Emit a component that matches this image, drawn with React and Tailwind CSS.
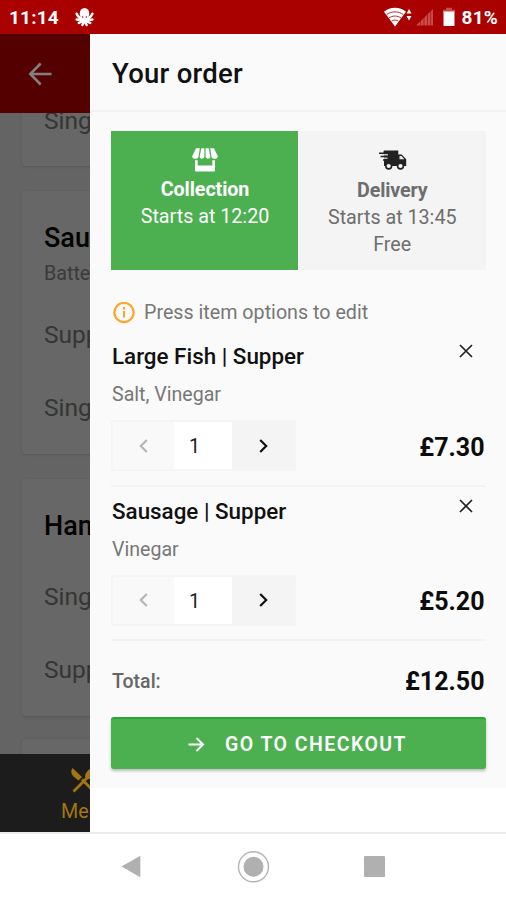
import React from "react";

function StatusBar() {
  return (
    <div className="flex h-[34px] items-center bg-[#a90000] pl-[9px] pr-[8px] text-white">
      <span className="pt-[2px] text-[19px] font-bold leading-[34px] tracking-[0.2px]">11:14</span>
      <svg className="ml-[16px] -mt-px" width="19" height="20" viewBox="0 0 20 20" fill="none" stroke="#fff" strokeWidth="2.600" strokeLinecap="round">
        <ellipse cx="10" cy="6.200" rx="5" ry="5.800" fill="#fff" stroke="none" />
        <path d="M7.500 10.500C6 12 3 9.500 1.700 6.500M7.500 11.500C6 13 3.500 13 1.700 12.600M8 12C8 15 5.500 15.500 4 16.200M9.200 12C9.500 15 9 17 7.800 18.400M12.500 10.500C14 12 17 9.500 18.300 6.500M12.500 11.500C14 13 16.500 13 18.300 12.600M12 12C12 15 14.500 15.500 16 16.200M10.800 12C10.500 15 11 17 12.200 18.400M10 8v6" />
        <circle cx="8" cy="10" r="0.800" fill="#a90000" stroke="none" />
        <circle cx="12" cy="10" r="0.800" fill="#a90000" stroke="none" />
      </svg>
      <div className="grow" />
      <svg width="28" height="20" viewBox="0 0 28 20">
        <path d="M0 4.800C6 -.6 16 -.6 22 4.800L11 19.500Z" fill="#fff" />
        <path d="M2.600 7.600c5-3.600 11.800-3.600 16.800 0M5 11c3.500-2.600 8.500-2.600 12 0M7.500 14.200c2.200-1.500 4.800-1.500 7 0" fill="none" stroke="#b92c2c" strokeWidth="1" />
        <path d="M25 2l2.500 4.600h-5zM25 13.500l2.500-4.600h-5z" fill="#fff" />
      </svg>
      <svg className="ml-[4px]" width="18" height="18" viewBox="0 0 18 18">
        <path d="M0 17.500L17 1v16.500z" fill="#c84c4c" />
        <path d="M4.500 0v18M8 0v18M11.500 0v18M14.700 0v18" stroke="#a90000" strokeWidth=".6" />
      </svg>
      <svg className="ml-[9px] mr-px" width="12" height="20" viewBox="0 0 12 20">
        <path d="M3 .8h6v2h3v3H0V2.800h3z" fill="#c84c4c" />
        <path d="M.5 4.500h11v14.500H.5z" fill="#fff" />
      </svg>
      <span className="ml-[6px] pt-[2px] text-[19px] font-bold leading-[34px] tracking-[0.200px]">81%</span>
    </div>
  );
}

function MenuRow({ children, className }) {
  return <div className={"pl-[22px] text-[24.500px] leading-[30px] text-[#353535] " + className}>{children}</div>;
}

function MenuBehind() {
  return (
    <div className="flex w-[90px] shrink-0 flex-col overflow-hidden whitespace-nowrap bg-[#646464]">
      <div className="flex h-[79px] shrink-0 items-center bg-[#550000] pl-[28px]">
        <svg width="24" height="24" viewBox="0 0 24 24" fill="none" stroke="#808080" strokeWidth="2.500">
          <path d="M23.500 12H2.500M12.700 1.500L2.200 12l10.500 10.500" />
        </svg>
      </div>
      <div className="flex h-[641px] shrink-0 flex-col overflow-hidden pl-[22px]">
        <div className="h-[53px] w-[200px] shrink-0 rounded-b bg-[#676767] shadow-[0_1px_2px_#585858]">
          <MenuRow className="-mt-[7px]">Single</MenuRow>
        </div>
        <div className="mt-[25px] h-[263px] w-[200px] shrink-0 rounded bg-[#676767] pt-[32px] shadow-[0_1px_2px_#585858]">
          <div className="pl-[22px] text-[27px] font-medium leading-[30px] text-black">Sausage</div>
          <div className="mt-[7px] pl-[22px] text-[19.700px] leading-[28px] text-[#3a3a3a]">Battered</div>
          <MenuRow className="mt-[32px]">Supper</MenuRow>
          <MenuRow className="mt-[43px]">Single</MenuRow>
        </div>
        <div className="mt-[25px] h-[237px] w-[200px] shrink-0 rounded bg-[#676767] pt-[32px] shadow-[0_1px_2px_#585858]">
          <div className="pl-[22px] text-[27px] font-medium leading-[30px] text-black">Hamburger</div>
          <MenuRow className="mt-[41px]">Single</MenuRow>
          <MenuRow className="mt-[43px]">Supper</MenuRow>
        </div>
        <div className="mt-[23px] h-[40px] w-[200px] shrink-0 rounded bg-[#676767] shadow-[0_0_2px_#5a5a5a]" />
      </div>
      <div className="h-[78px] shrink-0 bg-[#1c1c1c] pl-[61px] pt-[13px] text-[#a37613]">
        <svg className="ml-[9px]" width="27" height="26" viewBox="0 0 27 26" fill="none">
          <path d="M2.500 1C.5 4 1 7 3.500 9.500l5 4 3.500-3.500z" fill="#a37613" />
          <path d="M3.500 24.500L19 9M12 12.500l12 12" stroke="#a37613" strokeWidth="2.800" />
          <path d="M15.500 11C14 8 17 3 22 1l4 4c-2 5-6 8-9 7z" fill="#a37613" />
        </svg>
        <div className="text-[19.700px] leading-[37px]">Menu</div>
      </div>
    </div>
  );
}

function StoreIcon() {
  return (
    <svg width="26" height="24" viewBox="0 0 26 24" fill="#fff">
      <path d="M4 .3h3.800L6.600 8.500c-.3 3.200-6.400 3.200-6.400-.3zM9.300.3h3.100v8.500c-.5 2.500-4.600 2.500-4.700 0zM13.600.3h3.100l1.600 8.500c-.1 2.500-4.200 2.500-4.700 0zM18.200.3H22l3.800 7.900c0 3.500-6.100 3.500-6.400.3z" />
      <path d="M3 12.300h2.700v5.200h14.600v-5.200H23v9.600c0 1-.6 1.600-1.600 1.600H4.600c-1 0-1.600-.6-1.600-1.600z" />
    </svg>
  );
}

function TruckIcon() {
  return (
    <svg className="ml-[2px]" width="28" height="20" viewBox="0 0 28 20">
      <path d="M4.500 2C4.500.9 5 .6 5.700.6h13.600v4h3.400l4.500 4.700V16H5V9z" fill="#222" />
      <path d="M20.500 6h2l2.900 3.300h-4.900z" fill="#e8e8e8" />
      <path d="M0 4.800h9M1.500 8.200h7" stroke="#f4f4f4" strokeWidth="1.300" />
      <path d="M0 3.300h9.500M1.500 6.600h9M4 10h5.500" stroke="#222" strokeWidth="1.500" />
      <g fill="#f4f4f4" stroke="#222" strokeWidth="1.600">
        <circle cx="9.700" cy="16" r="2.900" />
        <circle cx="21.500" cy="16" r="2.900" />
      </g>
    </svg>
  );
}

function Chevron({ flip, color }) {
  return (
    <svg width="9" height="14" viewBox="0 0 9 14" fill="none" stroke={color} strokeWidth="2.200">
      <path d={flip ? "M7.800 1L1.800 7l6 6" : "M1.200 1l6 6-6 6"} />
    </svg>
  );
}

function Item({ name, options, price }) {
  return (
    <div className="flex h-[154.500px] flex-col border-b-2 border-[#f3f3f3]">
      <div className="flex h-[40px] justify-between pt-[9px]">
        <span className="pl-px text-[22.400px] font-medium leading-[30px]">{name}</span>
        <svg className="mr-[13px] mt-[3px]" width="14" height="14" viewBox="0 0 14 14" stroke="#222" strokeWidth="1.700">
          <path d="M1 1l12 12M13 1L1 13" />
        </svg>
      </div>
      <div className="h-[48px] pl-px pt-[9px] text-[19.600px] leading-[28px] text-[#777]">{options}</div>
      <div className="flex items-center justify-between">
        <div className="flex h-[51px] w-[185px] border-2 border-[#f5f5f5] bg-white">
          <div className="flex w-[61px] items-center justify-center bg-[#f9f9f9]">
            <Chevron flip color="#b5b5b5" />
          </div>
          <div className="w-[58px] pl-[15px] text-[19.700px] leading-[50px] text-[#222]">1</div>
          <div className="flex grow items-center justify-center bg-[#f4f4f4]">
            <Chevron color="#111" />
          </div>
        </div>
        <span className="pr-px pt-[4px] text-[25px] font-bold leading-[30px] text-[#0c0c0c]">{price}</span>
      </div>
    </div>
  );
}

function OrderDrawer() {
  return (
    <div className="flex grow flex-col bg-white">
      <div className="h-[754px] bg-[#fafafa] text-[#111]">
        <div className="h-[78px] border-b-2 border-[#f2f2f2] pl-[22px] text-[27.500px] font-medium leading-[79px] tracking-[0.250px]">Your order</div>
        <div className="pl-[21px] pr-[20.500px] pt-[19px]">
          <div className="flex h-[138.500px] text-center text-[19.700px] leading-[27px]">
            <div className="flex w-[187px] flex-col items-center bg-[#4caf50] pl-px pt-[17px] text-white">
              <StoreIcon />
              <div className="mt-[4px] font-bold tracking-[-0.080px]">Collection</div>
              <div>Starts at 12:20</div>
            </div>
            <div className="flex grow flex-col items-center bg-[#f4f4f4] pl-px pt-[19px] text-[#6e6e6e]">
              <TruckIcon />
              <div className="mt-[7px] font-bold tracking-[-0.150px]">Delivery</div>
              <div>Starts at 13:45</div>
              <div>Free</div>
            </div>
          </div>
          <div className="flex h-[62.500px] items-center pt-[24px] text-[19.700px] text-[#777]">
            <svg className="ml-[2px] mr-[9px]" width="22" height="22" viewBox="0 0 22 22" fill="none">
              <circle cx="11" cy="10.500" r="9.600" stroke="#fda52d" strokeWidth="2.200" />
              <path d="M11 9V15.500M11 5.100V7.500" stroke="#fda52d" strokeWidth="2.100" />
            </svg>
            <span>Press item options to edit</span>
          </div>
          <Item name="Large Fish | Supper" options="Salt, Vinegar" price="£7.30" />
          <Item name="Sausage | Supper" options="Vinegar" price="£5.20" />
          <div className="flex h-[76px] items-center justify-between pt-[5px]">
            <span className="pl-px text-[19.500px] font-medium text-[#666]">Total:</span>
            <span className="pr-px text-[25px] font-bold text-[#0c0c0c]">£12.50</span>
          </div>
          <div className="flex h-[52px] items-center rounded-[3px] border-t-2 border-t-[#2aa336] bg-[#4caf50] pl-[77px] pt-px text-white shadow-[0_2px_3px_#bbb]">
            <svg width="17" height="16" viewBox="0 0 17 16" fill="none" stroke="#fff" strokeWidth="2">
              <path d="M.5 7.500H15M8.500 1L15 7.500l-6.500 6.500" />
            </svg>
            <span className="ml-[20px] text-[19.500px] font-semibold tracking-[1.450px]">GO TO CHECKOUT</span>
          </div>
        </div>
      </div>
    </div>
  );
}

function SystemNav() {
  return (
    <div className="flex h-[68px] items-center border-t-2 border-[#ececec] bg-white pl-[121px]">
      <svg width="20" height="24" viewBox="0 0 20 24" fill="#b0b0b0">
        <path d="M.5 11.500L19.300 .7v21.600z" />
      </svg>
      <svg className="ml-[96px]" width="33" height="33" viewBox="0 0 33 33">
        <circle cx="16.500" cy="15.800" r="15" fill="none" stroke="#b5b5b5" strokeWidth="1.400" />
        <circle cx="16.500" cy="15.800" r="10" fill="#b0b0b0" />
      </svg>
      <div className="-mt-px ml-[94px] h-[21px] w-[21px] rounded-[1px] bg-[#b0b0b0]" />
    </div>
  );
}

export default function App() {
  return (
    <div className="h-[900px] w-[506px] overflow-hidden bg-white font-['Roboto',sans-serif]">
      <StatusBar />
      <div className="flex h-[798px]">
        <MenuBehind />
        <OrderDrawer />
      </div>
      <SystemNav />
    </div>
  );
}
